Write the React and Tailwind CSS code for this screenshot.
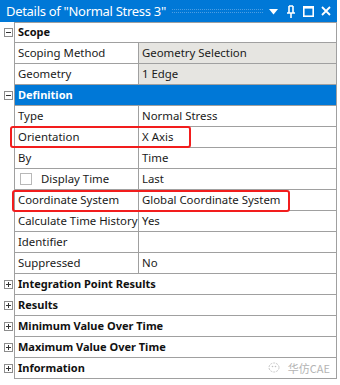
import React from 'react';

const font = { fontFamily: '"Noto Sans", "Open Sans", sans-serif' };

const ToggleBox = ({ open }) => (
    <div className="w-[9px] h-[9px] border border-[#8c8c8c] bg-white flex items-center justify-center relative">
        <div className="absolute w-[5px] h-px bg-[#333]" />
        {!open && <div className="absolute w-px h-[5px] bg-[#333]" />}
    </div>
);

const GroupRow = ({ title, open, selected, first, children }) => (
    <div className="flex h-[21px]">
        <div className="w-[14px] flex items-center justify-start pl-[4px]">
            <ToggleBox open={open} />
        </div>
        <div className={`flex-1 flex items-center border-l border-r border-b border-[#a0a0a0] pl-[3px] pr-[6px] text-[11px] font-bold ${first ? 'border-t' : ''} ${selected ? 'bg-[#0078d7] text-white' : 'bg-white text-[#111]'}`}>
            <span>{title}</span>
            {children}
        </div>
    </div>
);

const PropRow = ({ label, value, gray, check }) => (
    <div className="flex h-[21px]">
        <div className="w-[14px]" />
        <div className="flex-1 flex border-l border-r border-b border-[#a0a0a0] text-[11.4px] text-[#1a1a1a]">
            <div className="w-[124px] flex items-center pl-[3px] border-r border-[#a0a0a0] bg-white whitespace-nowrap overflow-hidden">
                {check && <div className="w-[12px] h-[12px] border border-[#b8b8b8] bg-white ml-[2px] mr-[9px]" />}
                {label}
            </div>
            <div className={`flex-1 flex items-center pl-[3px] ${gray ? 'bg-[#e6e5e1]' : 'bg-white'}`}>{value}</div>
        </div>
    </div>
);

const Details = () => {
    return (
        <div className="w-[340px] h-[385px] bg-white overflow-hidden" style={font}>
            <div className="w-[337px]">
                {/* title bar */}
                <div className="h-[22px] bg-[#0078d7] flex items-center pl-[6px] pr-[6px] text-white">
                    <span className="text-[13px] tracking-[-0.3px] leading-none whitespace-nowrap">Details of "Normal Stress 3"</span>
                    <div className="flex-1 mx-[6px] h-[4px] border-t border-b border-dotted border-[#4d9ee3]" />
                    <svg width="9" height="6" viewBox="0 0 9 6" className="mr-[8px] mt-[1px]">
                        <path d="M0 0 H9 L4.5 5.5 Z" fill="white" />
                    </svg>
                    <svg width="10" height="13" viewBox="0 0 10 13" className="mr-[7px]">
                        <path d="M3 1 V8 M7 1 V8 M1 8 H9 M5 8 V13 M3 1 H7" stroke="white" strokeWidth="1.6" fill="none" />
                    </svg>
                    <svg width="11" height="11" viewBox="0 0 11 11" className="mr-[7px]">
                        <rect x="0.8" y="0.8" width="9.4" height="9.4" stroke="white" strokeWidth="1.6" fill="none" />
                        <path d="M0.8 1.8 H10.2" stroke="white" strokeWidth="1.6" />
                    </svg>
                    <svg width="10" height="10" viewBox="0 0 10 10">
                        <path d="M1 1 L9 9 M9 1 L1 9" stroke="white" strokeWidth="1.8" />
                    </svg>
                </div>

                {/* property grid */}
                <div className="relative">
                    <GroupRow title="Scope" open first />
                    <PropRow label="Scoping Method" value="Geometry Selection" gray />
                    <PropRow label="Geometry" value="1 Edge" gray />
                    <GroupRow title="Definition" open selected />
                    <PropRow label="Type" value="Normal Stress" />
                    <PropRow label="Orientation" value="X Axis" />
                    <PropRow label="By" value="Time" />
                    <PropRow label="Display Time" value="Last" check />
                    <PropRow label="Coordinate System" value="Global Coordinate System" />
                    <PropRow label="Calculate Time History" value="Yes" />
                    <PropRow label="Identifier" value="" />
                    <PropRow label="Suppressed" value="No" />
                    <GroupRow title="Integration Point Results" />
                    <GroupRow title="Results" />
                    <GroupRow title="Minimum Value Over Time" />
                    <GroupRow title="Maximum Value Over Time" />
                    <GroupRow title="Information">
                        <div className="ml-auto flex items-center gap-[6px] text-[11px] font-normal text-[#b4b4b4]" style={{ fontFamily: '"Noto Sans CJK SC", "Noto Sans", sans-serif' }}>
                            <svg width="14" height="12" viewBox="0 0 14 12">
                                <ellipse cx="6" cy="5.5" rx="5" ry="4.5" stroke="#c8c8c8" strokeWidth="1" fill="none" strokeDasharray="2 1" />
                                <circle cx="4.5" cy="4.5" r="0.8" fill="#c0c0c0" />
                                <circle cx="7.5" cy="4.5" r="0.8" fill="#c0c0c0" />
                            </svg>
                            <span>华仿CAE</span>
                        </div>
                    </GroupRow>

                    {/* red highlight boxes */}
                    <div className="absolute left-[10px] top-[104px] w-[181px] h-[22px] border-2 border-[#f21d1d] rounded-[3px]" />
                    <div className="absolute left-[12px] top-[168px] w-[278px] h-[22px] border-2 border-[#f21d1d] rounded-[3px]" />
                </div>
            </div>
        </div>
    );
};

export default function App() {
    return <Details />;
}
